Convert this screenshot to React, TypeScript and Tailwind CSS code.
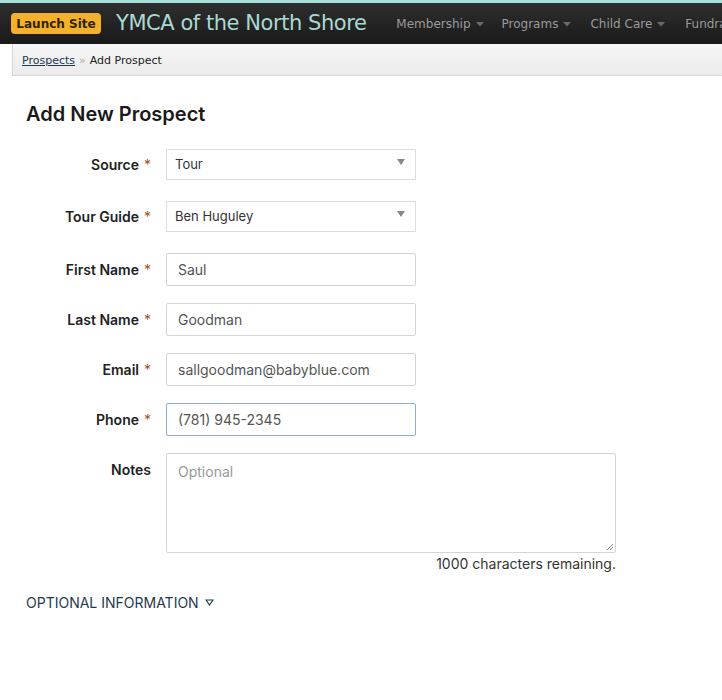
import React from "react";

const Caret = () => (
  <svg width="8" height="5" viewBox="0 0 8 5" className="ml-[5px] mt-[1px] shrink-0">
    <path d="M0 0 L8 0 L4 4.5 Z" fill="#6a6a6a" />
  </svg>
);

const SelectArrow = () => (
  <svg width="8" height="6" viewBox="0 0 8 6" className="absolute right-[10px] top-[9px]">
    <path d="M0 0 L8 0 L4 6 Z" fill="#888" />
  </svg>
);

function Label({ text, req = true, top = false }: { text: string; req?: boolean; top?: boolean }) {
  return (
    <div className={`w-[151px] shrink-0 text-right text-[14px] font-semibold text-[#222] ${top ? "pt-[6px]" : ""}`}>
      {text}
      {req && <span className="ml-[5px] font-normal text-[#a0522d]">*</span>}
    </div>
  );
}

function SelectRow({ label, value }: { label: string; value: string }) {
  return (
    <div className="flex items-center">
      <Label text={label} />
      <div className="relative ml-[15px] flex h-[31px] w-[250px] items-center border border-[#ddd] bg-white pl-[8px] text-[13px] text-[#333]">
        {value}
        <SelectArrow />
      </div>
    </div>
  );
}

function InputRow({ label, value, focus = false }: { label: string; value: string; focus?: boolean }) {
  return (
    <div className="flex items-center">
      <Label text={label} />
      <div
        className={`ml-[15px] flex h-[33px] w-[250px] items-center rounded-[2px] border bg-white pl-[11px] text-[14px] text-[#555] ${
          focus ? "border-[#8fb0cc]" : "border-[#d4d4d4]"
        }`}
      >
        {value}
      </div>
    </div>
  );
}

export default function App() {
  return (
    <div className="min-h-[700px] w-[722px] overflow-hidden bg-white" style={{ fontFamily: "Inter, 'Noto Sans', sans-serif" }}>
      <div className="h-[3px] bg-[#a7dfdb]" />
      <div
        className="flex h-[41px] items-center overflow-hidden bg-gradient-to-b from-[#2e2e2e] to-[#1a1a1a] pl-[11px] whitespace-nowrap"
        style={{ fontFamily: "Tahoma, 'DejaVu Sans', Verdana, sans-serif" }}
      >
        <div className="flex h-[21px] w-[90px] shrink-0 items-center justify-center rounded-[4px] bg-[#f3b12c] text-[12px] font-bold text-[#2f2200]">
          Launch Site
        </div>
        <div className="ml-[15px] shrink-0 text-[21px] tracking-[-0.45px] text-[#a9d9d4]">YMCA of the North Shore</div>
        <div className="ml-[30px] flex shrink-0 items-center text-[12px] text-[#9a9a9a]">
          <span className="flex items-center">Membership<Caret /></span>
          <span className="ml-[18px] flex items-center">Programs<Caret /></span>
          <span className="ml-[19px] flex items-center">Child Care<Caret /></span>
          <span className="ml-[20px] flex items-center">Fundraising<Caret /></span>
        </div>
      </div>
      <div className="ml-[12px] flex h-[32px] items-center border-b border-l border-[#d9d9d9] bg-gradient-to-b from-[#f6f6f6] to-[#ebebeb] pl-[9px] pt-[3px] text-[11px] text-[#222]"
        style={{ fontFamily: "Tahoma, 'DejaVu Sans', Verdana, sans-serif" }}>
        <span className="text-[#1d3a52] underline">Prospects</span>
        <span className="mx-[4px] text-[#aaa]">»</span>
        <span>Add Prospect</span>
      </div>

      <div className="pl-[26px] pt-[23px] text-[20px] font-semibold text-[#1a1a1a]">Add New Prospect</div>

      <div className="mt-[20px] flex flex-col">
        <SelectRow label="Source" value="Tour" />
        <div className="h-[21px]" />
        <SelectRow label="Tour Guide" value="Ben Huguley" />
        <div className="h-[21px]" />
        <InputRow label="First Name" value="Saul" />
        <div className="h-[17px]" />
        <InputRow label="Last Name" value="Goodman" />
        <div className="h-[17px]" />
        <InputRow label="Email" value="sallgoodman@babyblue.com" />
        <div className="h-[17px]" />
        <InputRow label="Phone" value="(781) 945-2345" focus />
        <div className="h-[17px]" />
        <div className="flex items-start">
          <Label text="Notes" req={false} top />
          <div className="ml-[15px] flex flex-col items-end">
            <div className="relative h-[100px] w-[450px] rounded-[2px] border border-[#d4d4d4] bg-white pl-[11px] pt-[7px] text-[14px] text-[#999]">
              Optional
              <svg width="8" height="8" viewBox="0 0 8 8" className="absolute bottom-[1px] right-[1px]">
                <path d="M7 1 L1 7 M7 4 L4 7" stroke="#888" strokeWidth="1" />
              </svg>
            </div>
            <div className="text-[14px] text-[#333]">1000 characters remaining.</div>
          </div>
        </div>
        <div className="mt-[18px] flex items-center pl-[26px] text-[14px] text-[#1f3a4e]">
          OPTIONAL INFORMATION
          <svg width="9" height="7" viewBox="0 0 9 7" className="ml-[6px]">
            <path d="M1 1 L8 1 L4.5 6 Z" fill="none" stroke="#1f3a4e" strokeWidth="1.2" />
          </svg>
        </div>
      </div>
    </div>
  );
}
